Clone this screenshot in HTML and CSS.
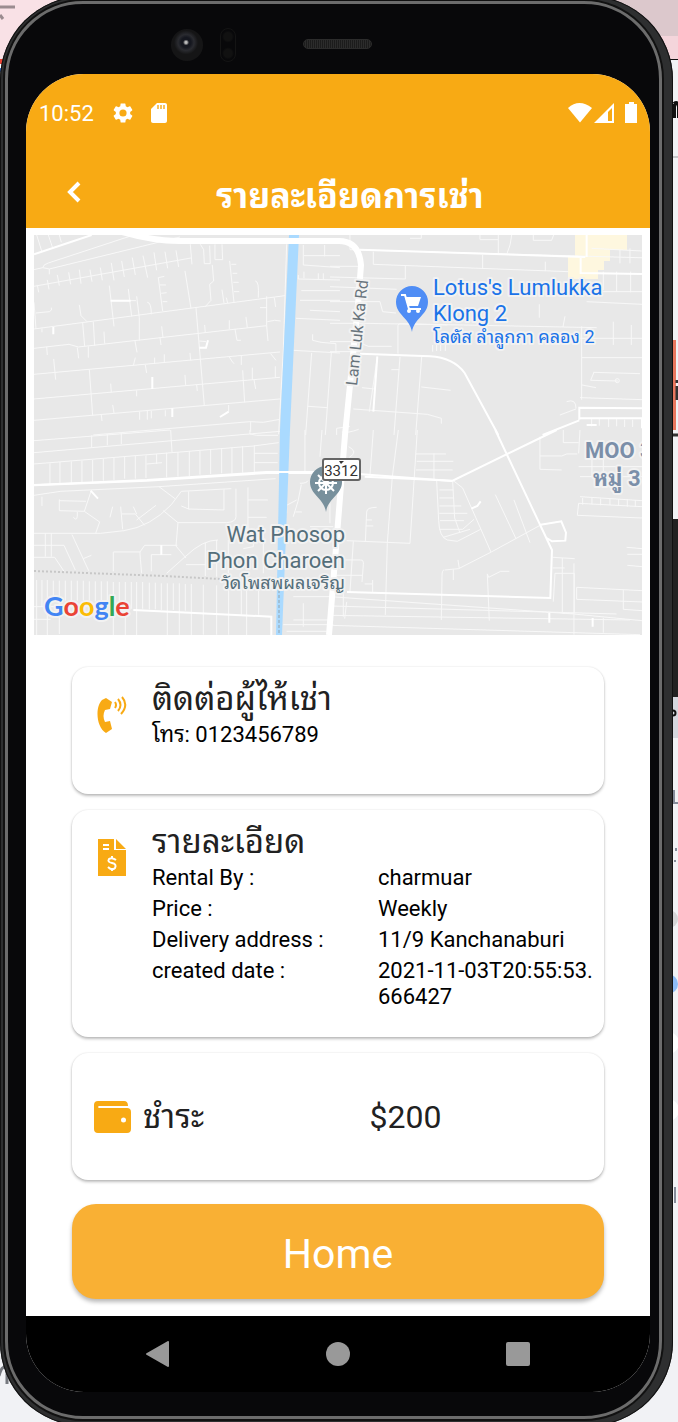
FILE: index.html
```html
<!DOCTYPE html>
<html lang="th">
<head>
<meta charset="utf-8">
<meta name="viewport" content="width=device-width, initial-scale=1">
<title>รายละเอียดการเช่า</title>
<link rel="stylesheet" href="styles.css">
</head>
<body>
<div class="desktop">
  <svg class="backdrop backdrop-left" width="60" height="1422" viewBox="0 0 60 1422" aria-hidden="true">
    <path fill="#f9e1e6" d="M0 0h60v59H0z"/>
    <path stroke="#9b8c90" stroke-width="3" d="M0 7h15M0 15l3 4"/>
    <path fill="#e94335" d="M0 59h3v5H0z"/><path fill="#fff" d="M0 64h3v4H0z"/><path fill="#4285f4" d="M0 68h3v4H0z"/>
    <path fill="none" stroke="#777a80" stroke-width="3" d="M-1 1376q3-12 8-8v16"/>
  </svg>
  <svg class="backdrop backdrop-right" width="78" height="1422" viewBox="0 0 78 1422" aria-hidden="true">
    <path fill="#dcc8cc" d="M0 0h78v36H0z"/><path fill="#f4d5db" d="M0 36h78v23H0z"/><path fill="#111" d="M0 59h78v1H0z"/>
    <path fill="#c8c9cc" d="M0 156h78v2H0z"/>
    <path fill="none" stroke="#111" stroke-width="4" d="M74 118v-14M74 104q4-3 5 3v11"/>
    <path fill="#e9775f" d="M0 340h76v90H0z"/>
    <path stroke="#333" stroke-width="3" d="M77 386v14M77 380v3M73 435h5"/>
    <path fill="#222" d="M0 519h78v178H0z"/><path fill="#d5d7de" d="M0 697h78v41H0z"/>
    <circle cx="73" cy="713" r="2.500" fill="none" stroke="#111" stroke-width="2"/>
    <path fill="none" stroke="#858c9a" stroke-width="2" d="M74 790v13h4M76 848v3M74 861h2M75 1187v16"/>
    <circle cx="69" cy="919" r="9" fill="#d5d5d7"/><circle cx="68" cy="984" r="10" fill="#8ebcf7"/>
    <circle cx="68" cy="1043" r="11" fill="#fff"/><circle cx="68" cy="1110" r="11" fill="#fff"/>
  </svg>

  <div class="phone">
    <div class="bezel-top" aria-hidden="true">
      <span class="camera"></span>
      <span class="sensor"></span>
      <span class="speaker"></span>
    </div>

    <main class="screen">
      <header class="app-header">
        <div class="status-bar">
          <time class="clock">10:52</time>
          <svg class="status-icon" width="24" height="24" viewBox="0 0 24 24" aria-hidden="true"><path fill="#fff" d="M19.140 12.940c.04-.3.06-.61.06-.94 0-.32-.02-.64-.07-.94l2.030-1.580a.49.49 0 0 0 .12-.61l-1.920-3.320a.49.49 0 0 0-.59-.22l-2.390.96c-.5-.38-1.030-.7-1.620-.94l-.36-2.540a.48.48 0 0 0-.48-.41h-3.840c-.24 0-.43.17-.47.41l-.36 2.540c-.59.24-1.130.57-1.620.94l-2.390-.96a.48.48 0 0 0-.59.22L2.740 8.870a.48.48 0 0 0 .12.61l2.030 1.580c-.05.3-.09.63-.09.94s.02.64.07.94l-2.030 1.580a.49.49 0 0 0-.12.61l1.920 3.320c.12.22.37.29.59.22l2.390-.96c.5.38 1.030.7 1.620.94l.36 2.540c.05.24.24.41.48.41h3.840c.24 0 .44-.17.47-.41l.36-2.540c.59-.24 1.130-.56 1.620-.94l2.390.96c.22.08.47 0 .59-.22l1.920-3.320a.47.47 0 0 0-.12-.61zM12 15.600a3.600 3.600 0 1 1 0-7.200 3.600 3.600 0 0 1 0 7.200z"/></svg>
          <svg class="status-icon" width="24" height="24" viewBox="0 0 24 24" aria-hidden="true"><path fill="#fff" d="M18 2h-8L4 8v12c0 1.100.9 2 2 2h12c1.100 0 2-.9 2-2V4c0-1.100-.9-2-2-2z"/><path fill="#f8aa14" opacity=".7" d="M10 4h2v4h-2zM13 4h2v4h-2zM16 4h2v4h-2z"/></svg>
          <svg class="signals" width="70" height="22" viewBox="0 0 70 22" aria-hidden="true"><path fill="#fff" d="M0 6Q11-4 24 6L12 20.500z"/><path fill="#fff" fill-rule="evenodd" d="M46 1v20H26zM44 6l-4 4v9h4z"/><path fill="#fff" d="M61 0h5v2h3v19H57V2h4z"/></svg>
        </div>
        <div class="title-bar">
          <button class="back" type="button" aria-label="กลับ"><svg width="16" height="24" viewBox="0 0 16 24" aria-hidden="true"><path d="M13 3 4 12l9 9" fill="none" stroke="#fff" stroke-width="4"/></svg></button>
          <h1 class="title">รายละเอียดการเช่า</h1>
        </div>
      </header>

      <svg class="map" viewBox="0 0 608 400" role="img" aria-label="แผนที่">
        <rect width="608" height="400" fill="#e8e8e8"/>
        <path fill="#fef7df" d="M541 0h52v15h-17v11h-6v9h-6v9h-30V21h7z"/>
        <g class="roads">
          <g transform="translate(-14 -10) scale(.3333)">
            <path d="M50 30l15 48M85 30l12 36M118 30l6 22M42 134L68 128Q70 118 85 114L335 32M68 128l20 4L480 36M88 132v16M42 184L513 99M52 180l4 22M82 165l5 28M112 150l6 32M146 142l6 36M178 134l5 42M210 134l6 36M241 128l6 38M274 114l8 52M305 108l8 48M337 98l9 52M369 92l14 66M402 82l8 54M435 80l8 50M468 76l8 50M511 58l5 60M42 312L795 212M42 370l105-12 28 8L740 302M42 448L780 381M42 522L780 457M42 586L780 522M220 630L690 590l40 2 50-9"/>
            <path d="M42 232l6 80M48 264l40-4q10-4 6-12M178 240l5 32 18 18M268 182l14 122M272 227h76M325 192l10 82M350 214l8 64v68M382 232q12 0 12 36M415 158l13 100M415 158l18-4M418 180h20M424 205l16-2M428 230h14M495 138l18 112M541 58l10 16 2 42h18l-2-54M577 120l4 48-12 10 4 48-18 20M585 58v46h23l-2-46M606 194l6 40M619 218l4 16M629 108l13 124M634 118h15M638 145h14M640 172h16M642 200h16M706 168q12 0 9 50M740 214v88l4 46M763 218l4 28M742 290l22-4 18 2M720 248h20M188 294l6 70M220 290l4 72M252 320l2 36M425 304l4 34M420 338l3 22M528 248l25 294M554 300l2 24M538 348l20 2M628 312v-26M678 276l4 32M645 312l6 34h12M80 366l2 24M172 368l4 32M205 364v34M345 348l6 34M346 398l-6 24M404 398v18M433 388v26M510 384l2 22M628 396q8 14 14 20M664 392v28M752 386l16 20M101 402l6 62M376 420l4 24M208 434l10 138M272 476l2 26M350 496v18M495 450l2 30M530 480l2 18M668 436l6 96M697 428v36M766 424v34M702 464l5 28M66 310v12M244 570l2 18M278 540l4 24M359 560v24M382 558v26M394 558v22M436 556v18M692 590v30M626 540v20M850 60v60l110 8M852 92h108M914 60v34M835 150v12l125 3M852 140v20M895 145v20M910 145v20M844 197h116M840 226h120M870 256l90 4M828 280l132 6M878 328v18l25 6 45 4v28M820 376l140 8M875 384l-18 246M934 384l-18 246M864 544l58 4M800 58l-10 320-14 250"/>
            <path stroke-width="6" d="M42 88L215 30M272 227h60M397 456v36M457 550v26M600 576l26-16M538 368h20l6-22M100 306v22"/>
          </g>
          <g transform="translate(296 -10) scale(.3333)">
            <path d="M60 30v44l900 25M240 40h34V30M450 30v14h54M505 30v56M545 30q-2 30-14 56M610 30v16h55l6-16M130 80v38l585 22M458 90v42M646 110v28M226 122v40L0 156M94 124H0M0 185l200 8M0 230h150l8 30 40 4M0 295h100l300 5 400 8M628 238v40M204 386V302q0-6 8-6l140 4M0 350h80l35 14h70M0 380h90M142 396L118 560M210 396l-18 234M275 396l-18 234M184 434h24M70 552l222 16 42 12v16M274 486l88 10M96 488l36 4M705 274l-6 32M755 304v220M750 340h186M850 290v70M904 300v60M900 70v45M870 75v40M785 70l150 8M820 140v55M860 140v60M902 140v62M750 200h186M770 230l166 8M756 398h180M790 442l140 4M792 442l-10 24 82 2M756 480l42 8M750 518l186 6M710 530q28-10 28 20M690 570l48-18M785 582v22M808 580v22M836 580v26M860 580v24M884 584v22M908 584v22M308 360v20M320 358v20M332 358v20M346 356v22M20 630v-20l40-6"/>
            <path stroke-width="6" d="M90 74l676 22M90 386l210 8q70 4 104 50L505 630M142 394l-12 166M752 96v48l184 3M770 30v66M748 584v-36l188 2M638 630L748 586M750 580h186v30M770 600h30"/>
            <circle cx="862" cy="467" r="6"/>
          </g>
          <g transform="translate(-14 195) scale(.3333)">
            <path d="M42 32L450 0M42 68L780 4M42 102L700 48l76-10M42 196l80-12 295-14 350-24M42 310h200l70-8q80-12 142-78l30-40 150-8M215 16v36M262 12v34M304 8v34M452 0l4 66M90 100v62M120 96v64M154 94v66M186 92v66M218 90v66M250 86v66M282 84v66M314 80v66M346 78v68M378 76v68M410 72v30M380 102l46-4M440 68v74M474 66v74M508 64v74M540 62v72M572 58v74M605 54v76M636 52v78M668 48v80M703 46v82M703 70h70M703 98h70M690 0v12l20 4h64M118 208v34l75 2 20-60M118 212l80 2M66 200v28M193 244l46 32-12 34M160 262q14 16 12-16M278 230l-8 32M302 230l6 68M306 252h40l28 34M340 230l10 22M350 270l58-44M417 170l48 36M430 242l44 36-6 70 30 36M612 178v62l-106-3V184M484 228l24 10M648 176v84q0 16-28 18H474M684 172v130M684 210h60M684 262h56M42 346h90l34 74M42 382h62l28 42M76 310v70M94 310v70M156 314l50 108M190 386l24-10M280 424v-58h80q0 12 5 64M360 366l14-20h98M394 424v-50h60M440 430l58-52q50-48 96-48M498 404h60M556 338v100M590 330v110M625 330v100M700 300v50l-30 6M730 310v120M855 0v128M906 0l-6 80M840 160q20 0 24-8M800 250v-24l30-16M820 260l14-46 10-50M826 246h20M888 190h60M930 220v60M870 290h70"/>
            <path d="M50 450v165M66 450v80M82 450v165M100 452v60M118 452v160M136 452v60M154 452v80M172 452v60M190 452v60M208 454v60M226 454v60M244 454v60M262 454v60M280 456v160M298 456v80M316 456v160M334 456v80M350 456v160M368 456v80M388 458v80M406 458v80M424 460v80M442 460v156M460 460v80M478 460v155M496 462v80M514 462v154M550 464v150M590 466v148M626 466v148M664 470v84M680 472v144M716 474v80M42 530h240M42 568h50M820 570h120M790 584h150M800 604h120M850 520v70M820 500h120"/>
            <path stroke-width="6" d="M42 166l338-14 360-23h220M340 540l414 20v55M424 346v28M212 182l22 24"/>
          </g>
          <g transform="translate(296 195) scale(.3333)">
            <path d="M130 0l-10 136M205 0l-18 140-15 200-6 215M262 0l-22 340-190-8M258 72h90M312 70v78M260 94h110M258 120h110M630 20v98l65 2M630 78h65l15-6h32M700 0v38h46M750 0l-4 70M56 50q30 16 2 32M36 6q18 4 50-8M106 336l4-90q0-14 30-14M108 270h18M108 288h22M320 152l6 120q2 50 26 58l30 4 70-36M328 180h42M328 204h44M328 228h66M328 250h84M330 272h72M328 298h70l34-30M340 322l80-24M368 154l6 110 16 45M370 152l28 22 85 192M496 194l62 132M552 210l48 128M342 420q-6 0-6 20l-2 130M344 420l42-4 98-50 150-82 62-10M384 390l4 26M370 418v32M472 432l4 10 36-18h26M472 432l6 140M70 334l-10 152M40 390h52q10 0 8 14l-4 52M20 436h76M40 460v100M104 462h24M128 450v36M675 430h58v120h-36V384M668 382l66 4M668 414h36M675 430l-5 85M732 400v214M740 472l196 10M740 472v36l196 8M880 480v58l56 4M890 352l46 4M892 373h44M892 406l44 4M0 500l730 52 206 20M0 528l860 24M0 556l900 14M0 586l930 28M50 516l-6 50M820 564v44M746 110h190M750 140h186M750 200l186 12M746 220l-4 36 194 8M746 220l190 10M758 204v20M786 204v20M812 206v20M840 206v20M866 208v20M892 208v22M916 210v20M786 80v60M820 84v56"/>
            <path stroke-width="6" d="M104 140l264 12L680 0M496 0l170 360-5 144-610-18M632 284l62-10 14 34-2 24-40 2-16-10M424 236l18-8 10-14M658 548v30M788 564v26"/>
          </g>
        </g>
        <path fill="none" stroke="#c7c7c7" stroke-width="2" stroke-dasharray="2 2" d="M0 336l130 5 75 4"/>
        <path fill="#aadaff" d="M255 0h10l-9 195-4 105-4 100h-6l4-205z"/>
        <path fill="none" stroke="#9fbfd6" stroke-width="2" stroke-dasharray="3 2" d="M245 350v50"/>
        <path fill="none" stroke="#fff" stroke-width="6" d="M88-3Q120 6 145 6h160q20 0 22 24l-3 40-13 130-16 200"/>
        <path fill="none" stroke="#fff" stroke-width="2" d="M0 250l113-5 120-8h65l120 9"/>

        <g class="place place-shop">
          <path fill="#4f8df5" d="M378 97c-2-14-16-17-16-30a16 16 0 0 1 32 0c0 13-14 16-16 30z"/>
          <path fill="none" stroke="#fff" stroke-width="2" d="M367 60h4l4 14h12"/><path fill="#fff" d="M371 62h16l-3 9h-10z"/><circle cx="375" cy="76" r="2" fill="#fff"/><circle cx="384" cy="76" r="2" fill="#fff"/>
          <text x="399" y="60">Lotus's Lumlukka</text><text x="399" y="86">Klong 2</text><text class="place-thai" x="399" y="108">โลตัส ลำลูกกา คลอง 2</text>
        </g>
        <g class="place place-temple">
          <path fill="#78909c" d="M292 277c-2-14-16-17-16-30a16 16 0 0 1 32 0c0 13-14 16-16 30z"/>
          <g fill="none" stroke="#fff" stroke-width="2"><circle cx="292" cy="248" r="7"/><path d="M292 237v22M281 248h22M284 240l16 16M300 240l-16 16"/></g>
          <text x="311" y="307">Wat Phosop</text><text x="311" y="333">Phon Charoen</text><text class="place-thai" x="311" y="354">วัดโพสพผลเจริญ</text>
        </g>
        <rect x="289" y="224" width="37" height="21" rx="2" fill="#fff" stroke="#656565" stroke-width="2"/>
        <path d="M305 226h5l-3 3z" fill="#333"/>
        <text class="route" x="307" y="241">3312</text>
        <text class="road-name" transform="translate(323 151) rotate(-84)">Lam Luk Ka Rd</text>
        <text class="district" x="551" y="223">MOO 3</text><text class="district" x="559" y="251">หมู่ 3</text>
        <text class="google" x="10" y="381"><tspan fill="#4285f4">G</tspan><tspan fill="#ea4335">o</tspan><tspan fill="#fbbc05">o</tspan><tspan fill="#4285f4">g</tspan><tspan fill="#34a853">l</tspan><tspan fill="#ea4335">e</tspan></text>
      </svg>

      <div class="cards">
        <section class="card">
          <svg class="card-icon" width="32" height="38" viewBox="0 0 32 38" aria-hidden="true"><path fill="#f8aa14" d="M10 2l6 4-2 7-5 1c-2 4-2 8 0 12l5-1 2 8-6 4C0 31-1 11 6 4z"/><g fill="none" stroke="#f8aa14" stroke-width="2"><path d="M19 6q2 3 0 6M22 3q5 6 0 12M26 1q7 8-1 17"/></g></svg>
          <div class="card-body">
            <h2 class="card-title">ติดต่อผู้ไห้เช่า</h2>
            <p class="card-text">โทร: 0123456789</p>
          </div>
        </section>

        <section class="card card-details">
          <svg class="card-icon" width="32" height="38" viewBox="0 0 32 38" aria-hidden="true"><path fill="#f8aa14" d="M2 0h16v11h12v26H2zM20 0l10 10H20z"/><path stroke="#fff" stroke-width="2" d="M7 6h6M7 10h6"/><path fill="none" stroke="#fff" stroke-width="2" d="M20 21q-4-3-7-1-2 3 3 4 5 1 3 5-3 3-7-1M16 17v3M16 29v3"/></svg>
          <div class="card-body">
            <h2 class="card-title">รายละเอียด</h2>
            <dl class="facts">
              <dt>Rental By :</dt><dd>charmuar</dd>
              <dt>Price :</dt><dd>Weekly</dd>
              <dt>Delivery address :</dt><dd>11/9 Kanchanaburi</dd>
              <dt>created date :</dt><dd>2021-11-03T20:55:53.<wbr>666427</dd>
            </dl>
          </div>
        </section>

        <section class="card card-payment">
          <svg width="38" height="34" viewBox="0 0 38 34" aria-hidden="true"><path fill="#f8aa14" fill-rule="evenodd" d="M5 1h26q4 0 4 5H6q-2 1 0 2h28q4 0 4 4v17q0 4-4 4H5q-4 0-4-4V5q0-4 4-4zm23 19a2 2 0 1 0 5 0 2 2 0 1 0-5 0z"/></svg>
          <h2 class="card-title">ชำระ</h2>
          <p class="amount">$200</p>
        </section>

        <button class="home" type="button">Home</button>
      </div>

      <nav class="system-nav" aria-label="System">
        <button type="button" aria-label="Back"><svg width="24" height="26" viewBox="0 0 24 26" aria-hidden="true"><path fill="#999" stroke="#999" stroke-width="2" stroke-linejoin="round" d="M22 1v24L1 13z"/></svg></button>
        <button type="button" aria-label="Home screen"><svg width="24" height="24" viewBox="0 0 24 24" aria-hidden="true"><circle cx="12" cy="12" r="12" fill="#999"/></svg></button>
        <button type="button" aria-label="Recent apps"><svg width="24" height="24" viewBox="0 0 24 24" aria-hidden="true"><rect width="24" height="24" rx="2" fill="#999"/></svg></button>
      </nav>
    </main>
  </div>
</div>
</body>
</html>
```
FILE: styles.css
```css
* { box-sizing: border-box; }

body {
  margin: 0;
  background: #f1f2f5;
  font-family: Roboto, "Noto Sans Thai Looped", "Noto Looped Thai", Loma, Waree, Garuda, "Noto Sans Thai", "Noto Sans", sans-serif;
  color: #000;
}

h1, h2, p, dl, dd { margin: 0; font-weight: 400; }

button {
  border: 0;
  padding: 0;
  background: none;
  color: inherit;
  font: inherit;
}

svg { display: block; }

.desktop {
  position: relative;
  overflow: hidden;
}

/* Windows peeking out behind the device */
.backdrop { position: absolute; top: 0; }
.backdrop-left { left: 0; }
.backdrop-right { right: 0; }

.phone {
  position: relative;
  isolation: isolate;
  margin: -4px 5px -4px 0;
  padding: 4px 23px 34px 26px;
  border-radius: 84px;
  background: #2e2f30;
  box-shadow: inset 0 0 0 1px #111;
}

/* Polished rim between the case and the glass */
.phone::before {
  content: "";
  position: absolute;
  z-index: -1;
  inset: 5px 11px 7px 5px;
  border: 3px solid #6c6c6c;
  border-radius: 78px;
  background: #08080a;
  box-shadow: 0 0 0 2px #111;
}

.bezel-top {
  position: relative;
  height: 74px;
}

.camera, .sensor, .speaker { position: absolute; }

.camera {
  left: 145px;
  top: 29px;
  width: 32px;
  height: 32px;
  border-radius: 50%;
  background: radial-gradient(circle at 47% 42%, #bbb 0 1px, #15171f 3px 5px, #2a2b30 8px, #151516 12px);
}

.sensor {
  left: 194px;
  top: 28px;
  width: 16px;
  height: 34px;
  border: 1px solid #141414;
  border-radius: 8px;
  background: radial-gradient(circle at 50% 24%, #111 4px, transparent 6px), radial-gradient(circle at 50% 76%, #111 4px, transparent 6px);
}

.speaker {
  left: 277px;
  top: 39px;
  width: 69px;
  height: 10px;
  border: 1px solid #2c2c2c;
  border-radius: 5px;
  background: repeating-linear-gradient(90deg, #1c1c1c 0 1px, #2c2c2c 1px 2px);
}

.screen {
  display: flex;
  flex-direction: column;
  overflow: hidden;
  border-radius: 58px;
  background: #fff;
}

.app-header {
  background: #f8aa14;
  color: #fff;
}

.status-bar {
  display: flex;
  align-items: center;
  height: 78px;
  padding: 0 12px 0 13px;
}

.clock { margin-right: 17px; font-size: 22px; }
.status-icon { margin-right: 12px; }
.signals { margin-left: auto; }

.title-bar {
  display: grid;
  grid-template-columns: 96px 1fr 72px;
  align-items: center;
  height: 76px;
  padding-top: 12px;
}

.back {
  display: grid;
  place-items: center;
  height: 32px;
  padding-bottom: 8px;
}

.title {
  font-size: 34px;
  font-weight: 700;
  line-height: 40px;
  text-align: center;
  white-space: nowrap;
}

.map { width: auto; margin: 7px 8px 0; }

.roads path, .roads circle {
  fill: none;
  stroke: #f8f8f8;
  stroke-width: 3;
}

.roads path[stroke-width="6"] { stroke: #fff; stroke-width: 6; }

.map text {
  paint-order: stroke;
  stroke: #f2f2f2;
  stroke-width: 4px;
  stroke-linejoin: round;
}

.place { font-size: 22px; }
.place .place-thai { font-size: 18px; }
.place-shop text { fill: #1a73e8; }
.place-temple text { fill: #546e7a; text-anchor: end; }
.map .route { font-size: 15px; fill: #333; text-anchor: middle; stroke: none; }
.road-name { font-size: 16px; fill: #68747c; }
.district { font-size: 22px; font-weight: 700; fill: #7b8fa9; }
.google { font-family: Lato, sans-serif; font-size: 27px; font-weight: 700; }

.cards {
  display: flex;
  flex-direction: column;
  gap: 16px;
  padding: 32px 46px 17px;
}

.card {
  display: grid;
  grid-template-columns: 56px 1fr;
  min-height: 127px;
  padding: 14px 0 27px 24px;
  border-radius: 16px;
  background: #fff;
  box-shadow: 0 2px 3px rgb(0 0 0 / 25%), 0 0 2px rgb(0 0 0 / 12%);
}

.card-icon { margin-top: 15px; }

.card-title {
  color: #212121;
  font-size: 33px;
  line-height: 36px;
}

.card-text, .facts {
  margin-top: 5px;
  font-size: 22px;
  line-height: 26px;
}

.facts {
  display: grid;
  grid-template-columns: 1fr 1fr;
  row-gap: 5px;
}

.card-payment {
  grid-template-columns: 38px 1fr 1fr;
  align-items: center;
  column-gap: 12px;
  padding: 0 20px 0 21px;
}

.amount {
  color: #212121;
  font-size: 32px;
  line-height: 36px;
}

.home {
  height: 95px;
  margin-top: 8px;
  padding-top: 4px;
  border-radius: 24px;
  background: #f9b034;
  box-shadow: 0 3px 4px rgb(0 0 0 / 28%);
  color: #fff;
  font-size: 41px;
}

.system-nav {
  display: flex;
  justify-content: space-around;
  align-items: center;
  height: 76px;
  padding: 0 42px;
  background: #000;
}
```
